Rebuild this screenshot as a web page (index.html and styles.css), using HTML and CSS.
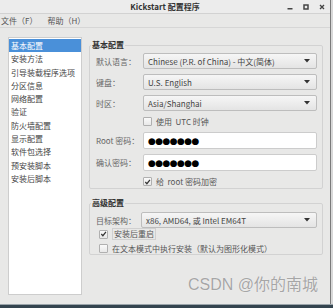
FILE: index.html
```html
<!DOCTYPE html>
<html lang="zh-CN">
<head>
    <meta charset="UTF-8">
    <meta name="viewport" content="width=device-width, initial-scale=1.0">
    <title>Kickstart 配置程序</title>
    <link rel="stylesheet" href="styles.css">
</head>
<body>
    <div class="window">
        <header class="titlebar">
            <span></span>
            <span class="title">Kickstart 配置程序</span>
            <span class="controls">
                <svg width="6" height="6" viewBox="0 0 6 6"><rect x="0.5" y="4" width="5" height="1.5" fill="#444"/></svg>
                <svg width="6" height="6" viewBox="0 0 6 6"><rect x="1" y="1" width="4" height="4" fill="none" stroke="#444" stroke-width="1.5"/></svg>
                <svg width="6" height="6" viewBox="0 0 6 6"><path d="M1 1 L5 5 M5 1 L1 5" stroke="#444" stroke-width="1.3"/></svg>
            </span>
        </header>

        <nav class="menubar">
            <span>文件（F）</span>
            <span>帮助（H）</span>
        </nav>

        <div class="main">
            <!-- section list -->
            <ul class="sections">
                <li class="active">基本配置</li>
                <li>安装方法</li>
                <li>引导装载程序选项</li>
                <li>分区信息</li>
                <li>网络配置</li>
                <li>验证</li>
                <li>防火墙配置</li>
                <li>显示配置</li>
                <li>软件包选择</li>
                <li>预安装脚本</li>
                <li>安装后脚本</li>
            </ul>

            <div class="panel">
                <fieldset class="group basic">
                    <legend>基本配置</legend>
                    <div class="form">
                        <label>默认语言：</label>
                        <div class="select">Chinese (P.R. of China) - 中文(简体)<svg width="6" height="4" viewBox="0 0 6 4"><path d="M0 0 H6 L3 3.5 Z" fill="#333"/></svg></div>

                        <label>键盘：</label>
                        <div class="select">U.S. English<svg width="6" height="4" viewBox="0 0 6 4"><path d="M0 0 H6 L3 3.5 Z" fill="#333"/></svg></div>

                        <label>时区：</label>
                        <div class="select">Asia/Shanghai<svg width="6" height="4" viewBox="0 0 6 4"><path d="M0 0 H6 L3 3.5 Z" fill="#333"/></svg></div>

                        <span></span>
                        <div class="check"><span class="box"></span>使用&nbsp; UTC 时钟</div>

                        <label>Root 密码：</label>
                        <div class="input">●●●●●●●</div>

                        <label>确认密码：</label>
                        <div class="input">●●●●●●●</div>

                        <span></span>
                        <div class="check"><span class="box checked"><svg width="8" height="8" viewBox="0 0 8 8"><path d="M1.5 4 L3.3 6 L6.8 1.5" fill="none" stroke="#333" stroke-width="1.4"/></svg></span>给&nbsp; root 密码加密</div>
                    </div>
                </fieldset>

                <fieldset class="group advanced">
                    <legend>高级配置</legend>
                    <div class="form">
                        <label>目标架构：</label>
                        <div class="select">x86, AMD64, 或 Intel EM64T<svg width="6" height="4" viewBox="0 0 6 4"><path d="M0 0 H6 L3 3.5 Z" fill="#333"/></svg></div>
                    </div>
                    <div class="check wide"><span class="box checked"><svg width="8" height="8" viewBox="0 0 8 8"><path d="M1.5 4 L3.3 6 L6.8 1.5" fill="none" stroke="#333" stroke-width="1.4"/></svg></span><span class="focus">安装后重启</span></div>
                    <div class="check wide"><span class="box"></span>在文本模式中执行安装（默认为图形化模式）</div>
                </fieldset>

                <div class="watermark">CSDN @你的南城</div>
            </div>
        </div>
    </div>
    <div class="desktop"></div>
</body>
</html>
```

FILE: styles.css
```css
html, body {
    margin: 0;
    padding: 0;
    width: 333px;
    height: 308px;
    overflow: hidden;
}

body {
    font-family: "Noto Sans CJK SC", "Noto Sans", sans-serif;
    font-size: 8px;
    color: #444;
    background: #d8d8d8;
}

.window {
    width: 330px;
    height: 304px;
    background: #e8e8e7;
    border-right: 1px solid #7a7a7a;
    display: flex;
    flex-direction: column;
}

.titlebar {
    height: 16px;
    border-bottom: 1px solid #d2d2d2;
    background: #ececec;
    display: grid;
    grid-template-columns: 1fr auto 1fr;
    align-items: center;
}

.title {
    font-weight: bold;
    color: #333;
}

.controls {
    justify-self: end;
    display: flex;
    gap: 10px;
    padding-right: 5px;
}

.menubar {
    height: 15px;
    border-bottom: 1px solid #d6d6d6;
    display: flex;
    align-items: center;
    gap: 10px;
    padding-left: 1px;
    color: #555;
}

.main {
    flex: 1;
    display: flex;
    gap: 7px;
    padding: 9px 7px 9px 8px;
}

.sections {
    list-style: none;
    margin: 0;
    padding: 1px 0 0;
    width: 72px;
    background: #fff;
    border: 1px solid #cdcdcd;
    color: #444;
}

.sections li {
    height: 13.3px;
    line-height: 13.3px;
    padding-left: 2px;
    white-space: nowrap;
}

.sections li.active {
    background: #4a90d9;
    color: #fff;
}

.panel {
    flex: 1;
    display: flex;
    flex-direction: column;
    padding-top: 2px;
}

.group {
    margin: 0;
    padding: 2px 5px 1px 6px;
    border: 1px solid #d2d2d2;
    border-radius: 2px;
}

.group legend {
    padding: 0 1px;
    margin-left: -5px;
    line-height: 12px;
    font-weight: bold;
    color: #333;
}

.form {
    display: grid;
    grid-template-columns: 47px 1fr;
    row-gap: 5px;
    align-items: center;
}

.form label {
    color: #666;
    white-space: nowrap;
}

.select {
    height: 14px;
    border: 1px solid #bdbdbd;
    border-radius: 2px;
    background: linear-gradient(#f6f6f6, #e4e4e4);
    display: flex;
    align-items: center;
    justify-content: space-between;
    padding: 0 6px 0 4px;
    color: #444;
}

.input {
    height: 15px;
    border: 1px solid #cccccc;
    border-radius: 2px;
    background: #fff;
    display: flex;
    align-items: center;
    padding-left: 4px;
    font-family: "DejaVu Sans", sans-serif;
    font-size: 9px;
    letter-spacing: -0.6px;
    color: #000;
}

.check {
    height: 11px;
    display: flex;
    align-items: center;
    gap: 4px;
    color: #555;
}

.box {
    width: 7px;
    height: 7px;
    border: 1px solid #b0b0b0;
    border-radius: 1px;
    background: linear-gradient(#fafafa, #e8e8e8);
    display: flex;
    align-items: center;
    justify-content: center;
}

.advanced {
    margin-top: 8px;
    padding-bottom: 0;
}

.advanced .form {
    grid-template-columns: 45px 1fr;
    margin-top: 1px;
}

.check.wide {
    height: 12px;
    padding-left: 3px;
}

.advanced .check.wide:first-of-type {
    margin-top: 5px;
}

.advanced .check.wide + .check.wide {
    margin-top: 2px;
}

.focus {
    border: 1px solid #d0d0d0;
    padding: 0 1px;
    line-height: 10px;
}

.watermark {
    margin-top: 16px;
    align-self: flex-end;
    padding-right: 5px;
    font-family: "Liberation Sans", "Noto Sans CJK SC", sans-serif;
    font-size: 16px;
    color: #a6a6a6;
    text-shadow: 0 0 1px #fff;
}

.desktop {
    height: 4px;
    background: #34444f;
    border-top: 1px solid #9aa4aa;
}
```
